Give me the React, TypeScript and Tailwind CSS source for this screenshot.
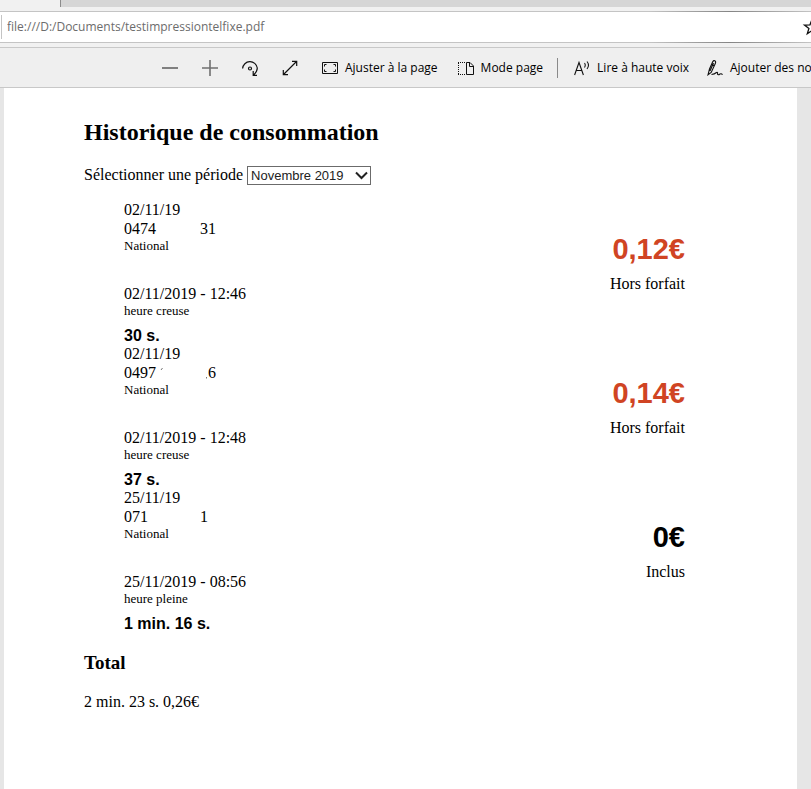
import type { ReactNode } from "react";

type Call = {
  day: string;
  prefix: string;
  suffix: string;
  hiddenClass: string;
  traces: string;
  time: string;
  band: string;
  duration: string;
  price: string;
  plan: string;
  extra: boolean;
};

const calls: Call[] = [
  { day: "02/11/19", prefix: "0474", suffix: "31", hiddenClass: "w-11", traces: "", time: "02/11/2019 - 12:46", band: "heure creuse", duration: "30 s.", price: "0,12€", plan: "Hors forfait", extra: true },
  { day: "02/11/19", prefix: "0497", suffix: "6", hiddenClass: "w-[52px]", traces: "M5 3L6.500 1M50.500 10V11.500", time: "02/11/2019 - 12:48", band: "heure creuse", duration: "37 s.", price: "0,14€", plan: "Hors forfait", extra: true },
  { day: "25/11/19", prefix: "071", suffix: "1", hiddenClass: "w-[52px]", traces: "", time: "25/11/2019 - 08:56", band: "heure pleine", duration: "1 min. 16 s.", price: "0€", plan: "Inclus", extra: false },
];

function Tool({ label, text, children }: { label: string; text?: string; children: ReactNode }) {
  return (
    <button type="button" aria-label={label} className="flex shrink-0 items-center gap-[7px] whitespace-nowrap text-[12px] leading-4 text-black">
      {children}
      {text}
    </button>
  );
}

function BrowserBar() {
  return (
    <header className="bg-[#f1f1f1] font-['Open_Sans',sans-serif]">
      <div className="flex h-[7px]">
        <div className="w-[60px] bg-[#f1f1f1]" />
        <div className="flex-1 border-l border-[#8c8c8c] bg-[#d6d6d6]" />
      </div>
      <div className="h-1" />
      <div className="bg-linear-to-r from-[#c4c4c4] from-80% via-[#858585] via-90% to-[#c4c4c4] py-px">
        <div className="flex h-[30px] items-center bg-white">
          <div className="ml-px h-6 w-px shrink-0 bg-[#c4c4c4]" />
          <input aria-label="Adresse" readOnly value="file:///D:/Documents/testimpressiontelfixe.pdf" className="ml-[5px] min-w-0 flex-1 bg-transparent text-[12px] text-[#6c6c6c] outline-none" />
          <button type="button" aria-label="Favoris" className="-mr-[11px] shrink-0">
            <svg width="20" height="20" viewBox="0 0 20 20" fill="none" stroke="#111" strokeWidth="1.3">
              <path d="M10 2.500l2 5.300 5.500.2-4.400 3.400 1.600 5.400L10 13.600l-4.700 3.200 1.600-5.400L2.500 8l5.500-.2z" />
            </svg>
          </button>
        </div>
      </div>
      <div className="h-1" />
      <nav aria-label="Outils PDF" className="flex h-[41px] items-center overflow-hidden border-y border-[#c8c8c8] bg-[#efefef] pl-[162px]">
        <div className="flex shrink-0 gap-6">
          <Tool label="Zoom arrière">
            <svg width="16" height="16" stroke="#808080" strokeWidth="2"><path d="M0 8H16" /></svg>
          </Tool>
          <Tool label="Zoom avant">
            <svg width="16" height="16" stroke="#707070" strokeWidth="1.6"><path d="M0 8H16M8 0V16" /></svg>
          </Tool>
          <Tool label="Pivoter">
            <svg width="16" height="16" fill="none" stroke="#111" strokeWidth="1.2">
              <path d="M.6 8.500A7.400 7.400 0 0 1 15.300 8q0 3.500-3.700 7M11.200 11v4.400H15" />
              <circle cx="8" cy="8.500" r="1.500" />
            </svg>
          </Tool>
          <Tool label="Plein écran">
            <svg width="16" height="16" fill="none" stroke="#111" strokeWidth="1.2">
              <path d="M1.500 14.500L14.500 1.500M10 1.300H14.700V6M1.300 10V14.700H6" />
            </svg>
          </Tool>
          <Tool label="Ajuster à la page" text="Ajuster à la page">
            <svg width="16" height="14" fill="none" stroke="#111">
              <path d="M.5 1.500H15.500V12.500H.5zM2.500 5.500V3.500H4.500M11.500 3.500H13.500V5.500M13.500 8.500V10.500H11.500M4.500 10.500H2.500V8.500" />
            </svg>
          </Tool>
        </div>
        <div className="ml-5 flex shrink-0">
          <Tool label="Mode page" text="Mode page">
            <svg width="16" height="14" fill="none" stroke="#111">
              <path d="M8.500 1.500H12L15.500 5V13.500H8.500zM11.500 1.500V5.500H15.500" />
              <path strokeDasharray="1 1" d="M0 1.500H8M.5 2V13M0 13.500H8" />
            </svg>
          </Tool>
        </div>
        <div className="mr-4 ml-[14px] h-5 w-px shrink-0 bg-[#8a8a8a]" />
        <div className="flex shrink-0 gap-[18px]">
          <Tool label="Lire à haute voix" text="Lire à haute voix">
            <svg width="16" height="16" fill="none" stroke="#111" strokeWidth="1.100">
              <path d="M.6 15L5 2.500 9.400 15M2.300 10.500H7.700M10.500 3q1.500 2 0 4.500M13 1.500q3 3.500 0 7.500" />
            </svg>
          </Tool>
          <Tool label="Ajouter des notes" text="Ajouter des notes">
            <svg width="16" height="16" fill="none" stroke="#111" strokeWidth="1.100">
              <path d="M1 14.800L2.500 9 5.800 1.600Q7-.1 8.300 1.200 9 2 8.200 3.800L4.200 12.500zM4.500 4L7 5.500M6.500 3L3 11M4.500 14.500q3-.2 5-2 1.500-.8 1 1.500.5 1.500 2.500 0 1.500-.8 2.500.8" />
            </svg>
          </Tool>
        </div>
      </nav>
    </header>
  );
}

function CallEntry({ call }: { call: Call }) {
  return (
    <li className="flex justify-between text-[16px] leading-[19px]">
      <div>
        <p className="leading-[18px]">{call.day}</p>
        <p className="flex">
          {call.prefix}
          <svg className={`${call.hiddenClass} h-[19px] pt-1`} fill="none" stroke="#777" aria-hidden="true">
            <path d={call.traces} />
          </svg>
          {call.suffix}
        </p>
        <p className="text-[13px] leading-[15px]">National</p>
        <p className="mt-8 leading-[18px]">{call.time}</p>
        <p className="text-[13px] leading-[15px]">{call.band}</p>
        <p className="mt-2 font-['Liberation_Sans',sans-serif] font-bold">{call.duration}</p>
      </div>
      <div className="pt-8 text-right">
        <p className={`font-['Liberation_Sans',sans-serif] text-[29px] leading-8 font-bold ${call.extra ? "text-[#d04423]" : "text-black"}`}>{call.price}</p>
        <p className="mt-[9px]">{call.plan}</p>
      </div>
    </li>
  );
}

export default function App() {
  return (
    <div className="flex min-h-screen flex-col bg-[#e6e6e6]">
      <BrowserBar />
      <main className="mr-[14px] ml-1 flex-1 bg-white pr-28 pb-10 pl-20 font-['Liberation_Serif',serif] text-black">
        <h1 className="pt-[30px] text-[24px] leading-7 font-bold">Historique de consommation</h1>
        <div className="mt-[19px] flex h-5 items-center gap-1 text-[16px]">
          <label htmlFor="period">Sélectionner une période</label>
          <div className="relative">
            <select id="period" className="block h-[19px] w-[124px] appearance-none border border-[#6b6b6b] bg-white pl-[3px] font-['Liberation_Sans',sans-serif] text-[13px] leading-[17px] text-[#222]">
              <option>Novembre 2019</option>
            </select>
            <svg className="pointer-events-none absolute top-[5px] right-[3px]" width="13" height="9" fill="none" stroke="#222" strokeWidth="2">
              <path d="M1 1.500L6.500 7 12 1.500" />
            </svg>
          </div>
        </div>
        <ul className="mt-4 pl-10">
          {calls.map((call) => (
            <CallEntry key={call.time} call={call} />
          ))}
        </ul>
        <h2 className="mt-5 text-[19px] leading-5 font-bold">Total</h2>
        <p className="mt-[19px] text-[16px] leading-[19px]">2 min. 23 s. 0,26€</p>
      </main>
    </div>
  );
}
